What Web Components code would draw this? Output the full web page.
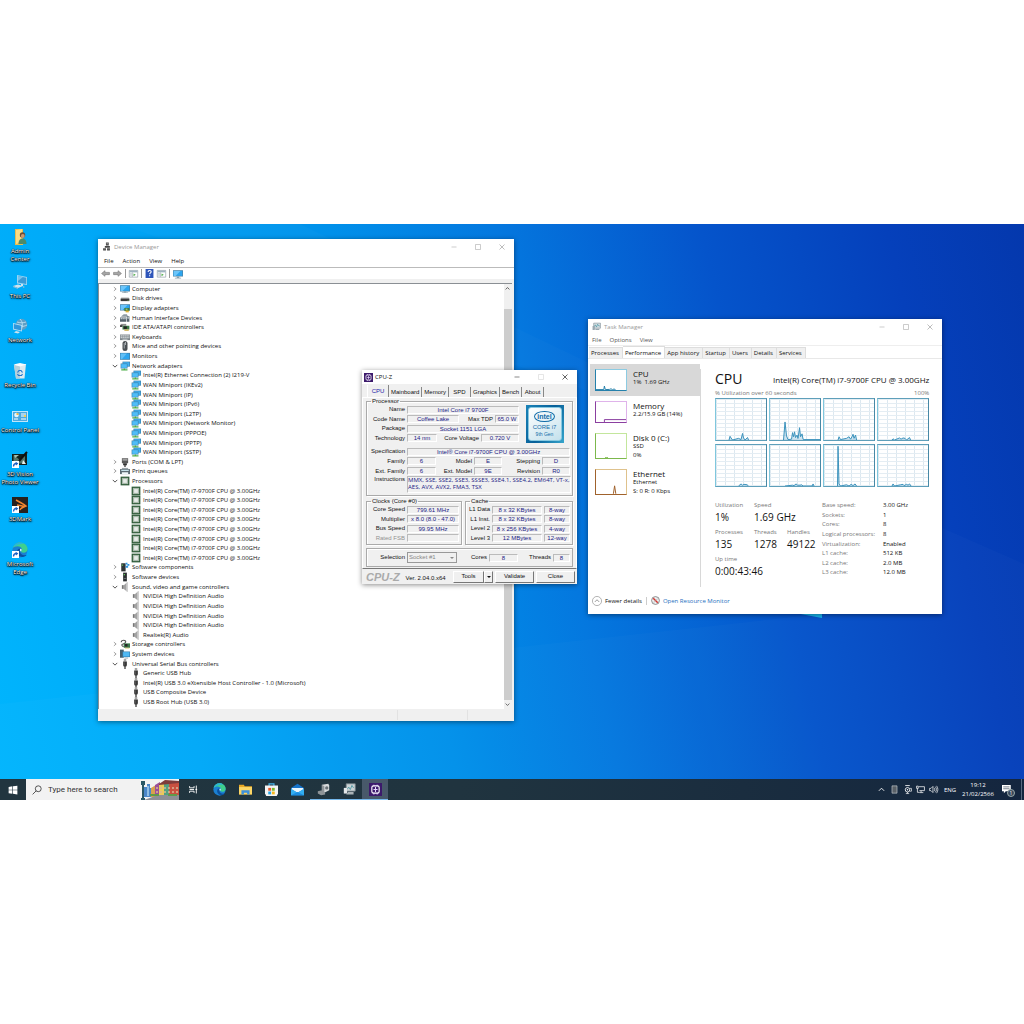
<!DOCTYPE html>
<html lang="en">
<head>
<meta charset="utf-8">
<title>Desktop</title>
<style>
  html, body { margin: 0; background: #fff; }
  body {
    min-height: 100vh;
    display: flex;
    align-items: center;
    font-family: "Open Sans", "Noto Sans", sans-serif;
    font-size: 6px;
    line-height: 8px;
    color: #111;
  }
</style>
</head>
<body>
<desktop-screen>
  <desktop-icon slot="icons" icon="admin" label="Admin<br>Center"></desktop-icon>
  <desktop-icon slot="icons" icon="pc" label="This PC"></desktop-icon>
  <desktop-icon slot="icons" icon="network" label="Network"></desktop-icon>
  <desktop-icon slot="icons" icon="bin" label="Recycle Bin"></desktop-icon>
  <desktop-icon slot="icons" icon="control" label="Control Panel"></desktop-icon>
  <desktop-icon slot="icons" icon="vision" label="3D Vision<br>Photo Viewer"></desktop-icon>
  <desktop-icon slot="icons" icon="mark" label="3DMark"></desktop-icon>
  <desktop-icon slot="icons" icon="edgelink" label="Microsoft<br>Edge"></desktop-icon>

  <app-window class="device" icon="devmgr" heading="Device Manager">
    <device-manager></device-manager>
  </app-window>
  <app-window class="task" icon="taskmgr" heading="Task Manager">
    <task-manager></task-manager>
  </app-window>
  <app-window class="cpuz" icon="cpuz" heading="CPU-Z" active>
    <cpu-z></cpu-z>
  </app-window>

  <task-bar slot="taskbar"></task-bar>
</desktop-screen>

<script>
// All icons share a 16x16 box
const screenShape = '<path fill="#4a7f9f" d="M0 2h16v10H0z"/><path fill="#2da5ee" d="M1 3h14v8H1z"/><path fill="#6bc5fa" d="M1 3h11L4 11H1z"/>';
const arrowBadge = '<path fill="#fff" d="M0 9h7v7H0z"/><path d="M1.500 14.500c0-2 1-3 3-3" fill="none" stroke="#1c62c4" stroke-width="1.300"/><path fill="#1c62c4" d="M3.500 9.700L6.400 11.400 4 13.400z"/>';
const edgeShape = '<circle cx="8" cy="8" r="7.600" fill="#1b80d2"/><path fill="#3fcf8e" d="M.8 6C2 2 5 .4 8 .4c4.500 0 7.600 3.300 7.600 6.600 0 2.600-2 3.800-4 3.800-1.800 0-2.600-.8-2.600-1.500 0-.6.8-1 .8-2C9.800 5.500 7.800 4.300 5.500 4.300 3.500 4.300 1.800 5 .8 6z"/><path fill="#2bb5d8" d="M.8 6C2 2 5 .4 8 .4c2 0 3.600.6 4.800 1.500C9 1.500 3 3 .8 6z"/><path fill="#0c519f" d="M5.500 8c-1.500 3 1 7 5 7 2 0 3.600-1.200 4.300-2.300-3 1.300-6.500 0-7-3.500-.1-1 .3-1.700.6-2C7.400 6.500 6.100 7 5.500 8z"/><path fill="#e8f8ff" d="M8.900 9.500c-1.300-.6-1.200-2.200-.2-2.700 1 .2 1.300 1.300.2 2.700z"/>';
const speaker = '<path fill="#777" d="M3 5h3v6H3z"/><path fill="#a3a3a3" d="M6 5l6-5v16l-6-5z"/><path fill="#d0d0d0" d="M10 2l2-2v16l-2-2z"/>';

const ICONS = {
  admin: '<path fill="#e9bd4e" d="M3 0h8v16H3z"/><path fill="#f9dc85" d="M4 1l6-1v13l-6 2z"/><circle cx="10.500" cy="6" r="2.700" fill="#6b4b34"/><circle cx="10.800" cy="7" r="1.900" fill="#c99a72"/><path fill="#4e8a6a" d="M6.500 15c0-4 2-5.500 4-5.500s4 1.500 4 5.500z"/>',
  pc: '<path fill="#9ad5f4" d="M5 1l10 2v8L5 9.500z"/><path fill="#3a9ad6" d="M6 2l8.200 1.800v6.200L6 8.500z"/><path fill="#74c3ee" d="M6 2l5 1.100L6 7z"/><path fill="#cfe3ee" d="M1 12l5-1.500 5 1.500-5 2zM9 10h2v2H9z"/><path fill="#8dbbd6" d="M1 12l5 2v1l-5-2zM11 12l2 1-2 1z"/>',
  network: '<circle cx="9.500" cy="6.500" r="5.800" fill="#5d9ec4"/><path d="M5 4c3 1 6 1 9 0M8 1c3 3 3 8 1 11M4 7c3 2 7 2 11 0" fill="none" stroke="#c4e6f7" stroke-width=".8"/><path fill="#b6e0f7" d="M1 5l9 2v6.500L1 11.500z"/><path fill="#2f97dc" d="M1.800 6l7.400 1.700v4.800l-7.400-1.700z"/><path fill="#cfe3ee" d="M4 13l4 1-2 1.500-4-1z"/>',
  bin: '<path fill="#dceaf0" d="M2 2l12-1-1.500 14.500h-8.500z"/><path fill="#b4cfda" d="M2 2l6 1v12.500H4z"/><path fill="#f7fcff" d="M1.500 1.500L8 0l6.500 1.500L8 3.500z"/><path d="M5.500 9.500L7 7.500h2l1.500 2M10.500 11l-1 1.500H6.500L5.500 11" fill="none" stroke="#2276cf" stroke-width="1.200"/>',
  control: '<path fill="#bfe6fa" d="M0 3h16v11H0z"/><path fill="#4ba9df" d="M1 4h14v9H1z"/><circle cx="4.500" cy="7" r="2.300" fill="#e5f7ff"/><path fill="#f0b840" d="M4.500 7V4.700A2.300 2.300 0 0 1 6.800 7z"/><path d="M9 6h5M9 8h3M9 11h5M2 11h4" stroke="#fff" stroke-width="1.200"/><path fill="#f4d051" d="M12 7h2v2h-2z"/>',
  vision: '<path fill="#12201c" d="M0 2h15v11H0z"/><path fill="#53756a" d="M1.500 3l6 4.500L13 3.500v8H1.500z"/><path fill="#a4c1b3" d="M2 3h5l-4 3z"/><path d="M15 0L7 9" stroke="#101010" stroke-width="2"/><path fill="#e6f0ec" d="M11 8l3 4h-4z"/>' + arrowBadge,
  mark: '<path fill="#26211f" d="M0 0h16v16H0z"/><path d="M4 3c5 3 8 4 10 6-3 1-5 1.500-6 4M5 8l8 1.500" fill="none" stroke="#f08530" stroke-width="1.500"/>' + arrowBadge,
  edgelink: edgeShape + arrowBadge,
  edge: edgeShape,
  devmgr: '<path fill="#444" d="M7 1h5v5H7zM5 7h9v3H5zM2 11h5v4H2zM9 11h5v4H9z"/><path fill="#999" d="M8 2h3v2H8zM3 12h3v1H3zM10 12h3v1h-3z"/>',
  taskmgr: '<path fill="#d8dfe3" stroke="#76858e" d="M3 2h12v9H3z"/><path d="M4 8l2-3 2 4 2-5 2 3h2" fill="none" stroke="#2e8a9a"/><path fill="#9aa8b0" d="M1 7h4v7H1zM6 12h7v2H6z"/>',
  cpuz: '<path fill="#3c1a6b" d="M0 0h16v16H0z"/><rect x="3.500" y="3.500" width="9" height="9" rx="2" fill="none" stroke="#fff" stroke-width="1.400"/><path d="M6 2v2M10 2v2M6 12v2M10 12v2M8 5v6M5.500 8h5" stroke="#e6d6ff" stroke-width="1.300"/>',
  computer: screenShape + '<path fill="#7d929d" d="M6 12h4v1h3v1H3v-1h3z"/>',
  disk: '<path fill="#b4b4b4" d="M2 7h12l1 3H1z"/><path fill="#3b3b3b" d="M1 9h14v4H1z"/><path fill="#7ecb5e" d="M12 11h2v1h-2z"/>',
  display: screenShape + '<path fill="#3f7b3a" d="M7 8h8v5H7z"/><path fill="#e3b33a" d="M9 12h5v3H9z"/><path fill="#9ec88f" d="M9 9h3v2H9z"/>',
  hid: '<path fill="#8f9ba3" d="M2 5l4-3h5l2 4H2z"/><path fill="#56646d" d="M0 7h10v7H0zM11 5h4v9h-4z"/><path fill="#cdd6dc" d="M1 8h2v2H1zM4 8h2v2H4zM7 8h2v2H7zM12 6h2v3h-2z"/>',
  ide: '<path fill="#8e8e8e" d="M1 3h9v3H1z"/><path fill="#3c7a48" d="M4 6h11v6H4z"/><path fill="#222" d="M6 7h5v4H6z"/><path fill="#caa63c" d="M7 12h7v2H7z"/><path fill="#444" d="M0 5h4v3H0z"/>',
  keyboard: '<path fill="#7e878c" d="M0 4h16v9H0z"/><path fill="#c9ced1" d="M1 5h14v5H1z"/><path d="M1 7h14M4 5v5M7 5v5M10 5v5M13 5v5" stroke="#7e878c" stroke-width=".7"/><path fill="#e5e8ea" d="M4 11h8v1H4z"/>',
  mouse: '<rect x="4" y="0" width="8" height="16" rx="4" fill="#4a4f53"/><path fill="#a7afb4" d="M6 3h1.500v9H6z"/><path fill="#e0e4e6" d="M8 1.500h1v5H8z"/>',
  monitor: '<path fill="#427b9e" d="M0 3h16v11H0z"/><path fill="#2da5ee" d="M1 4h14v9H1z"/><path fill="#61bff6" d="M1 4h10l-8 9H1z"/>',
  nic: '<path fill="#3b80aa" d="M4 1h12v8H4z"/><path fill="#40b2f4" d="M5 2h10v6H5z"/><path fill="#3b80aa" d="M1 4h11v8H1z"/><path fill="#4fbdf9" d="M2 5h9v6H2z"/><path fill="#4dad49" d="M6 12h2v1h4v2H2v-2h4z"/>',
  port: '<path fill="#5a5a5a" d="M3 2h10v8H3z"/><path fill="#9d9d9d" d="M4 3h8v3H4z"/><path fill="#333" d="M5 10h6v3H5zM7 13h2v3H7z"/>',
  printer: '<path fill="#9aa3a8" d="M3 3h10v3H3z"/><path fill="#5c6b73" d="M0 5h16v8H0z"/><path fill="#c6e1ea" d="M2 6h12v2H2z"/><path fill="#eef6f9" d="M3 10h10v3H3z"/>',
  cpu: '<path fill="#2e5b38" d="M1 1h14v14H1z"/><path fill="#a9b9ab" d="M3 3h10v10H3z"/><path fill="#e7ece8" d="M5 5h6v6H5z"/>',
  softcomp: '<path fill="#2f3436" d="M2 2h7v13H2z"/><path fill="#5ec25b" d="M3 4h2v2H3z"/><path fill="#2f93dd" d="M9 1h3v3H9zM12 3h3v3h-3zM9 6h4v3H9z"/>',
  softdev: '<path fill="#2a2e30" d="M5 1h6v14H5z"/><path fill="#64c460" d="M6 3h2v2H6z"/><path fill="#878d90" d="M6 10h4v1H6z"/>',
  sound: speaker,
  storage: '<path d="M2 5c0-4 8-4 7 0S2 7 3 10c1 2 3 2 3 2" fill="none" stroke="#555" stroke-width="1.800"/><path fill="#39774a" d="M6 7h10v7H6z"/><path fill="#262626" d="M8 8h4v4H8z"/><path fill="#d4ae3b" d="M8 14h7v1H8z"/>',
  system: '<path fill="#46606e" d="M0 1h6v13H0z"/><path fill="#347fae" d="M4 4h12v9H4z"/><path fill="#4fb9f4" d="M5 5h10v7H5z"/><path fill="#7b8a92" d="M7 14h6v1H7z"/>',
  usb: '<path fill="#a5a5a5" d="M6 0h4v4H6z"/><path fill="#393939" d="M5 4h6v6l-1 2H6l-1-2zM7 12h2v4H7z"/><path fill="#777" d="M6 5h1v5H6z"/>',
  back: '<path fill="#a6a6a6" stroke="#6f6f6f" d="M1 8l6-5v3h8v4H7v3z"/>',
  forward: '<path fill="#a6a6a6" stroke="#6f6f6f" d="M15 8L9 3v3H1v4h8v3z"/>',
  pane: '<path fill="#fff" stroke="#7c8b95" d="M.5 2.500h15v12H.5z"/><path fill="#9fb4c1" d="M1 3h14v3H1z"/><path d="M6 6v8" stroke="#8b979e"/><path fill="#51ad4c" d="M8 8l4 2-4 3z"/><path d="M2 8h3M2 10h3M2 12h3" stroke="#a0adb5"/>',
  help: '<path fill="#2f56ba" d="M1 0h14v16H1z"/><path d="M5.500 5.500c0-4 5.500-3.500 5.500-.5 0 2-2.700 2-2.700 4.500M8.200 11v2" fill="none" stroke="#fff" stroke-width="2"/>',
  scan: screenShape + '<path fill="#8aa0ac" d="M6 12h4v2h3v1H3v-1h3z"/>',
  min: '<path d="M3 8h10" stroke="currentColor"/>',
  max: '<path d="M3 3h10v10H3z" fill="none" stroke="currentColor"/>',
  close: '<path d="M3 3l10 10M13 3L3 13" stroke="currentColor" stroke-width="1.300"/>',
  right: '<path d="M5 3l6 5-6 5" fill="none" stroke="#777" stroke-width="1.800"/>',
  down: '<path d="M2 5l6 6 6-6" fill="none" stroke="#333" stroke-width="2.200"/>',
  up: '<path d="M2 11l6-6 6 6" fill="none" stroke="currentColor" stroke-width="2"/>',
  circleup: '<circle cx="8" cy="8" r="7.300" fill="none" stroke="#888"/><path d="M4.500 9.500L8 6l3.500 3.500" fill="none" stroke="#777" stroke-width="1.200"/>',
  resmon: '<circle cx="8" cy="8" r="7" fill="#eceff1" stroke="#777" stroke-width="1.400"/><path d="M4 4l8 8" stroke="#d3332d" stroke-width="2.500"/><path d="M5 12c1-3 3-5 7-7" fill="none" stroke="#9aa"/>',
  start: '<path fill="#fff" d="M1 3l6-1v5.500H1zM8 1.900L15 1v6.500H8zM1 8.500h6V14l-6-1zM8 8.500h7V15l-7-.9z"/>',
  search: '<circle cx="10" cy="6" r="4.700" fill="none" stroke="#333" stroke-width="1.300"/><path d="M6.700 9.300L1 15" stroke="#333" stroke-width="1.300"/>',
  taskview: '<path d="M1 2v3h8V2M1 14v-3h8v3M1 8h8M13 1v14M11.500 8h3" fill="none" stroke="#fff" stroke-width="1.600"/>',
  folder: '<path fill="#e8a825" d="M0 2h6l1 2h9v10H0z"/><path fill="#fbd667" d="M0 5h16v9H0z"/><path fill="#3c90dc" d="M3 9h10v5h-3v-2H6v2H3z"/>',
  store: '<path d="M5 4V1h6v3" fill="none" stroke="#45b4ea" stroke-width="1.500"/><path fill="#f4f4f4" d="M0 3h16v10l-1.500 3h-13L0 13z"/><path fill="#e8572c" d="M4 6h3.500v3.500H4z"/><path fill="#7cb82f" d="M8.500 6H12v3.500H8.500z"/><path fill="#29a4e4" d="M4 10.500h3.500V14H4z"/><path fill="#f7b81c" d="M8.500 10.500H12V14H8.500z"/>',
  mail: '<path fill="#1673ca" d="M0 6l8-5 8 5v9H0z"/><path fill="#e8f5fd" d="M1 6h14v2l-7 4-7-4z"/><path fill="#32aef0" d="M0 7l8 5 8-5v8H0z"/><path fill="#1b8be0" d="M0 15l8-4 8 4z"/>',
  drive: '<path fill="#d5d8da" d="M6 2l8-1 1 2v6l-6 3-3-2z"/><path fill="#8e9498" d="M6 2l3 2v8l-3-2zM1 10l5-1 4 3v2l-5 1-4-2z"/><circle cx="12" cy="6" r="2" fill="#666e73"/>',
  chart: '<path fill="#cbd2d5" stroke="#7d8a90" d="M4 1h11v9H4z"/><path d="M5 8l2-3 2 3 2-5 2 3" fill="none" stroke="#41929f"/><path fill="#e3e6e8" d="M1 6h4v7H1z"/><path fill="#aab3b7" d="M6 11h7v3H4z"/>',
  phone: '<path fill="#5a6168" stroke="#d8dde1" d="M3.500 1.500h9v13h-9z"/>',
  cam: '<path d="M4 1h8" stroke="#fff" stroke-width="1.500"/><circle cx="8" cy="8.500" r="4" fill="none" stroke="#fff" stroke-width="1.500"/><circle cx="8" cy="8.500" r="1.300" fill="#fff"/><path d="M8 12.500V15M5 15.200h6M12 6h3v5h-3" fill="none" stroke="#fff" stroke-width="1.200"/>',
  lan: '<path d="M5 3h10v7H6M9 10v3M6 13.500h7M1 2h3v4H1zM2.500 6v7H6" fill="none" stroke="#fff" stroke-width="1.300"/>',
  volume: '<path d="M1 6h2.500L7 2.500v11L3.500 10H1zM9 5c1.500 2 1.500 4 0 6M11.300 3c2.500 3 2.500 7 0 10M13.500 1.500c3 4 3 9 0 13" fill="none" stroke="#fff" stroke-width="1.200"/>',
  note: '<path fill="#fff" d="M0 0h14v10H6l-3 3v-3H0z"/><path d="M2 3h10M2 6h10" stroke="#26374c"/>'
};

class Base extends HTMLElement {
  constructor() {
    super();
    this.attachShadow({ mode: "open" });
  }

  connectedCallback() {
    this.shadowRoot.innerHTML = `
      <style>
        *, *::before { box-sizing: border-box; }
        button, select, input {
          font: inherit; color: inherit; margin: 0; padding: 0;
          border: 0; background: none; border-radius: 0; appearance: none;
          white-space: nowrap;
        }
        a { color: inherit; text-decoration: none; }
        ul { list-style: none; margin: 0; padding: 0; }
      </style>` + this.render();
  }
}

const icon = (name, size = 10) => `<ui-icon name="${name}" style="--size: ${size}px"></ui-icon>`;

customElements.define("ui-icon", class extends Base {
  render() {
    return `
      <style>
        :host { display: block; flex: none; width: var(--size, 10px); height: var(--size, 10px); }
        svg { display: block; width: 100%; height: 100%; overflow: visible; }
      </style>
      <svg viewBox="0 0 16 16" aria-hidden="true">${ICONS[this.getAttribute("name")]}</svg>`;
  }
});

customElements.define("desktop-icon", class extends Base {
  render() {
    return `
      <style>
        :host { display: block; }
        button {
          display: flex; flex-direction: column; align-items: center; gap: 2px;
          width: 100%; color: #fff;
          text-shadow: 0 0 1px #000, 0 0 1px #000, 0 1px 1px #000, 1px 1px 2px #000;
        }
        span { text-align: center; }
      </style>
      <button>${icon(this.getAttribute("icon"), 16)}<span>${this.getAttribute("label")}</span></button>`;
  }
});

customElements.define("app-window", class extends Base {
  render() {
    return `
      <style>
        :host { display: flex; flex-direction: column; background: #fff; color: #999; }
        :host([active]) { color: #111; }
        header { display: flex; align-items: center; gap: 3px; padding-left: 4px; height: 15px; flex: none; }
        :host([active]) header { height: 14px; padding-left: 2px; gap: 2px; }
        h1 { font: inherit; margin: 0; flex: 1; }
        .buttons { display: flex; }
        header button { width: 24px; height: 14px; display: grid; place-items: center; }
        :host([active]) .max { color: #ccc; }
        ::slotted(*) { flex: 1; min-height: 0; color: #111; }
      </style>
      <header>
        ${icon(this.getAttribute("icon"), 9)}
        <h1>${this.getAttribute("heading")}</h1>
        <div class="buttons">
          <button aria-label="Minimize">${icon("min", 8)}</button>
          <button class="max" aria-label="Maximize">${icon("max", 8)}</button>
          <button aria-label="Close">${icon("close", 8)}</button>
        </div>
      </header>
      <slot></slot>`;
  }
});

// [icon, label, children]; no children means a closed node
const core = "Intel(R) Core(TM) i7-9700F CPU @ 3.00GHz";
const nvidia = "NVIDIA High Definition Audio";
const DEVICES = [
  ["computer", "Computer"],
  ["disk", "Disk drives"],
  ["display", "Display adapters"],
  ["hid", "Human Interface Devices"],
  ["ide", "IDE ATA/ATAPI controllers"],
  ["keyboard", "Keyboards"],
  ["mouse", "Mice and other pointing devices"],
  ["monitor", "Monitors"],
  ["nic", "Network adapters", [
    "Intel(R) Ethernet Connection (2) I219-V", "WAN Miniport (IKEv2)", "WAN Miniport (IP)",
    "WAN Miniport (IPv6)", "WAN Miniport (L2TP)", "WAN Miniport (Network Monitor)",
    "WAN Miniport (PPPOE)", "WAN Miniport (PPTP)", "WAN Miniport (SSTP)"]],
  ["port", "Ports (COM &amp; LPT)"],
  ["printer", "Print queues"],
  ["cpu", "Processors", [core, core, core, core, core, core, core, core]],
  ["softcomp", "Software components"],
  ["softdev", "Software devices"],
  ["sound", "Sound, video and game controllers", [nvidia, nvidia, nvidia, nvidia, "Realtek(R) Audio"]],
  ["storage", "Storage controllers"],
  ["system", "System devices"],
  ["usb", "Universal Serial Bus controllers", [
    "Generic USB Hub", "Intel(R) USB 3.0 eXtensible Host Controller - 1.0 (Microsoft)",
    "USB Composite Device", "USB Root Hub (USB 3.0)"]]
];

customElements.define("device-manager", class extends Base {
  render() {
    const rows = DEVICES.map(([name, label, children]) => `
      <li role="treeitem" class="row">${icon(children ? "down" : "right", 6)}${icon(name)}<span>${label}</span></li>
      ${(children || []).map((child) => `<li role="treeitem" class="row child">${icon(name)}<span>${child}</span></li>`).join("")}
    `).join("");

    return `
      <style>
        :host { display: flex; flex-direction: column; background: #f0f0f0; }
        nav { display: flex; gap: 9px; padding: 0 6px; height: 14px; background: #fff; border-bottom: 1px solid #bbb; }
        .tools { display: flex; align-items: center; gap: 3px; height: 11px; background: #fff; padding-left: 3px; }
        .tools i { width: 1px; height: 9px; background: #999; }
        .body { display: flex; flex: 1; min-height: 0; margin: 4px 2px 0 0; border: 1px solid #8a8f94; border-width: 1px 0 0 1px; background: #fff; }
        ul { flex: 1; display: flex; flex-direction: column; padding-bottom: 2px; }
        .row { flex: 1; display: flex; align-items: center; gap: 2px; padding-left: 13px; min-height: 0; white-space: nowrap; }
        .child { padding-left: 32px; }
        .bar { width: 8px; background: #f0f0f0; display: flex; flex-direction: column; align-items: center; padding: 2px 0; }
        .thumb { flex: 1; align-self: stretch; background: #cdcdcd; margin: 18px 0 2px; }
        footer { display: flex; height: 12px; flex: none; }
        footer span { border-left: 1px solid #e2e2e2; width: 70px; margin: 1px 0; }
        footer span:first-child { flex: 1; border: 0; }
        footer span:last-child { width: 47px; }
      </style>
      <nav>${["File", "Action", "View", "Help"].map((t) => `<button>${t}</button>`).join("")}</nav>
      <div class="tools">
        <button aria-label="Back">${icon("back", 9)}</button>
        <button aria-label="Forward">${icon("forward", 9)}</button><i></i>
        <button aria-label="Show tree">${icon("pane", 9)}</button><i></i>
        <button aria-label="Help">${icon("help", 9)}</button>
        <button aria-label="Properties">${icon("pane", 9)}</button><i></i>
        <button aria-label="Scan">${icon("scan", 10)}</button>
      </div>
      <div class="body">
        <ul role="tree">${rows}</ul>
        <div class="bar">${icon("up", 5)}<div class="thumb"></div>${icon("down", 5)}</div>
      </div>
      <footer><span></span><span></span><span></span></footer>`;
  }
});

customElements.define("cpu-z", class extends Base {
  render() {
    const f = (text, cls = "") => `<output class="${cls}">${text}</output>`;
    const row = (cols, ...cells) => `<div class="row" style="grid-template-columns: ${cols}">${cells.join("")}</div>`;
    const l = (text) => `<span>${text}</span>`;

    return `
      <style>
        :host { display: flex; flex-direction: column; background: #f0f0f0; font-family: "Liberation Sans", sans-serif; line-height: 7px; }
        .tabs { display: flex; align-items: flex-end; padding: 1px 5px 0; }
        .tabs button { height: 10px; min-width: 22px; padding: 0 2px; border-right: 1px solid #888; }
        .tabs button:first-child { height: 12px; padding: 0 3px; color: #22a; border-left: 1px solid #fff; }
        main { flex: 1; display: flex; flex-direction: column; gap: 2px; padding: 0 3px; border: 1px solid #fff; border-bottom: 1px solid #777; }
        fieldset { margin: 0; padding: 0 2px; border: 1px solid #aaa; box-shadow: inset 1px 1px #fff, 1px 1px #fff; min-width: 0; }
        legend { padding: 0 1px; margin-left: 2px; line-height: 7px; }
        .row { display: grid; gap: 2px; align-items: center; }
        .row > span { text-align: right; white-space: nowrap; }
        output { display: block; height: 8px; line-height: 7px; color: #1a1a85; text-align: center; white-space: nowrap; border: 1px solid #bbb; border-color: #bbb #fff #fff #bbb; }
        .top { display: grid; grid-template-columns: 150px 1fr; align-items: center; justify-items: center; }
        .rows { display: grid; grid-auto-rows: 1fr; }
        .top .rows { width: 150px; height: 38px; }
        .mid { height: 29px; margin-top: 4px; }
        .ins { height: 17px; text-align: left; font-family: "Open Sans", "Noto Sans", sans-serif; }
        .last { align-items: start; margin-bottom: 2px; }
        .pair { display: grid; grid-template-columns: 96px 1fr; gap: 3px; }
        .pair .rows { height: 38px; margin-bottom: 1px; }
        .off { opacity: .45; }
        .sel { display: grid; grid-template-columns: 36px 50px 28px 29px 31px 1fr; align-items: center; gap: 2px; height: 19px; padding: 0 2px; border: 1px solid #aaa; box-shadow: inset 1px 1px #fff; margin: 1px 0; }
        .sel label, .sel > span { text-align: right; }
        .pick { display: grid; grid-template-columns: 1fr 8px; border: 1px solid #999; height: 11px; color: #888; align-items: center; }
        .pick select { padding-left: 1px; color: #888; opacity: 1; grid-area: 1 / 1 / 2 / 3; }
        .pick::after { content: ""; grid-area: 1 / 2; justify-self: center; border: 2px solid transparent; border-top-color: #888; border-bottom: 0; }
        .foot { display: flex; align-items: center; gap: 2px; height: 15px; padding: 0 2px 0 4px; }
        .foot b { font: italic bold 11px "Liberation Sans", sans-serif; color: #aaa; }
        .foot span { flex: 1; padding: 3px 0 0 4px; }
        .foot button { height: 12px; width: 39px; border: 1px solid #777; border-color: #fff #777 #777 #fff; }
        .foot .tools { width: 31px; margin-right: -2px; }
        .foot .drop { width: 9px; display: grid; place-items: center; }
        .drop::before { content: ""; border: 2px solid transparent; border-top-color: #111; border-bottom: 0; }
        .logo { width: 38px; height: 38px; padding: 2px; background: linear-gradient(120deg, #1a83b8, #075f98 50%, #36a5cc); }
        .logo div { height: 100%; border: 1px solid #87c9e1; border-radius: 3px; background: linear-gradient(150deg, #fff, #c4e1ec); color: #116ca8; text-align: center; display: flex; flex-direction: column; align-items: center; }
        .logo em { font: bold 7px/9px "Liberation Sans", sans-serif; border: 1px solid #116ca8; border-radius: 50%; padding: 0 2px; margin: 3px 0 2px; }
        .logo small { font-size: 5px; line-height: 6px; }
      </style>
      <div class="tabs">${["CPU", "Mainboard", "Memory", "SPD", "Graphics", "Bench", "About"].map((t) => `<button>${t}</button>`).join("")}</div>
      <main>
        <fieldset>
          <legend>Processor</legend>
          <div class="top">
            <div class="rows">
              ${row("36px 1fr", l("Name"), f("Intel Core i7 9700F"))}
              ${row("36px 1fr 32px 24px", l("Code Name"), f("Coffee Lake"), l("Max TDP"), f("65.0 W"))}
              ${row("36px 1fr", l("Package"), f("Socket 1151 LGA"))}
              ${row("36px 30px 1fr 38px", l("Technology"), f("14 nm"), l("Core Voltage"), f("0.720 V"))}
            </div>
            <div class="logo"><div><em>intel</em>CORE i7<small>9th Gen</small></div></div>
          </div>
          <div class="rows mid">
            ${row("36px 1fr", l("Specification"), f("Intel® Core i7-9700F CPU @ 3.00GHz"))}
            ${row("36px 29px 1fr 28px 36px 28px", l("Family"), f("6"), l("Model"), f("E"), l("Stepping"), f("D"))}
            ${row("36px 29px 1fr 28px 36px 28px", l("Ext. Family"), f("6"), l("Ext. Model"), f("9E"), l("Revision"), f("R0"))}
          </div>
          <div class="row last" style="grid-template-columns: 36px 1fr">
            ${l("Instructions")}${f("MMX, SSE, SSE2, SSE3, SSSE3, SSE4.1, SSE4.2, EM64T, VT-x,<br>AES, AVX, AVX2, FMA3, TSX", "ins")}
          </div>
        </fieldset>
        <div class="pair">
          <fieldset>
            <legend>Clocks (Core #0)</legend>
            <div class="rows">
              ${row("36px 1fr", l("Core Speed"), f("799.61 MHz"))}
              ${row("36px 1fr", l("Multiplier"), f("x 8.0 (8.0 - 47.0)"))}
              ${row("36px 1fr", l("Bus Speed"), f("99.95 MHz"))}
              ${row("36px 1fr", `<span class="off">Rated FSB</span>`, f(""))}
            </div>
          </fieldset>
          <fieldset>
            <legend>Cache</legend>
            <div class="rows">
              ${row("22px 1fr 26px", l("L1 Data"), f("8 x 32 KBytes"), f("8-way"))}
              ${row("22px 1fr 26px", l("L1 Inst."), f("8 x 32 KBytes"), f("8-way"))}
              ${row("22px 1fr 26px", l("Level 2"), f("8 x 256 KBytes"), f("4-way"))}
              ${row("22px 1fr 26px", l("Level 3"), f("12 MBytes"), f("12-way"))}
            </div>
          </fieldset>
        </div>
        <div class="sel">
          <label for="socket">Selection</label>
          <div class="pick"><select id="socket" disabled><option>Socket #1</option></select></div>
          <span>Cores</span>${f("8")}<span>Threads</span>${f("8")}
        </div>
      </main>
      <div class="foot">
        <b>CPU-Z</b><span>Ver. 2.04.0.x64</span>
        <button class="tools">Tools</button><button class="drop" aria-label="More tools"></button>
        <button>Validate</button><button>Close</button>
      </div>`;
  }
});

// Small line chart, points are given in a 100x100 box with y up
customElements.define("usage-graph", class extends Base {
  render() {
    const points = this.getAttribute("points") || "";
    const line = points.split(" ").filter(Boolean).map((p) => {
      const [x, y] = p.split(",");
      return `${x},${100 - y}`;
    }).join(" ");
    const grid = this.hasAttribute("grid");

    return `
      <style>
        :host { display: block; box-sizing: border-box; border: 1px solid var(--line); border-color: var(--pale) var(--pale) var(--line) var(--line); background-color: #fff; }
        :host([grid]) {
          border-color: #5e9fba #4889a6 #5e9fba #7fc7dd;
          background-image: linear-gradient(#e4edf3 1px, transparent 1px), linear-gradient(90deg, #dce8f0 1px, transparent 1px);
          background-size: 9px 4px;
        }
        svg { display: block; width: 100%; height: 100%; }
      </style>
      <svg viewBox="0 0 100 100" preserveAspectRatio="none" aria-hidden="true">
        <polyline points="${line}" fill="${grid ? "rgba(17,125,187,.2)" : "none"}" stroke="var(--line)" stroke-width="1" vector-effect="non-scaling-stroke"/>
      </svg>`;
  }
});

customElements.define("task-manager", class extends Base {
  render() {
    const items = [
      ["CPU", "1%&nbsp; 1.69 GHz", "#2580ab", "#8ccbe2", "0,2 26,2 28,20 31,2 45,3 50,6 55,2 60,5 65,2"],
      ["Memory", "2.2/15.9 GB (14%)", "#8b3fa0", "#dfb3ea", "28,0 28,12 100,12"],
      ["Disk 0 (C:)", "SSD<br>0%", "#7cb84c", "#c3e69c", "30,1 35,2 40,1"],
      ["Ethernet", "Ethernet<br>S: 0 R: 0 Kbps", "#a0622c", "#dfc28c", "58,1 62,34 66,1"]
    ];
    const graphs = [
      "26,0 28,9 30,5 33,0 45,4 50,1 53,16 55,5 58,0 63,6 65,0",
      "27,0 30,44 33,10 36,1 43,2 45,18 47,8 49,20 51,6 54,12 56,4 59,30 61,8 64,15 66,2 68,1 100,1",
      "28,0 30,8 33,1 45,4 50,8 53,2 56,8 58,14 60,4 63,12 65,0",
      "28,0 30,3 33,0 43,5 46,2 50,5 54,4 57,0 63,6 65,0",
      "45,0 50,5 53,2 56,4 62,3 65,0",
      "30,0 45,2 48,1 52,5 55,2 60,2 63,3 66,0 84,0 86,5 88,0",
      "27,0 28,97 30,5 33,0 45,3 50,0 54,4 58,1 62,5 65,0",
      "28,0 30,5 33,0 45,3 50,4 52,1 57,4 60,2 63,5 66,0"
    ];
    const details = [
      ["Base speed:", "3.00 GHz"], ["Sockets:", "1"], ["Cores:", "8"], ["Logical processors:", "8"],
      ["Virtualization:", "Enabled"], ["L1 cache:", "512 KB"], ["L2 cache:", "2.0 MB"], ["L3 cache:", "12.0 MB"]
    ];
    const tabs = ["Processes", "Performance", "App history", "Startup", "Users", "Details", "Services"];

    return `
      <style>
        :host { display: flex; flex-direction: column; background: #fff; }
        .menu { display: flex; gap: 8px; padding: 0 4px; height: 12px; border-bottom: 1px solid #eee; color: #555; }
        .tabs { display: flex; align-items: flex-end; height: 13px; padding-left: 1px; border-bottom: 1px solid #e8e8e8; }
        .tabs button { height: 11px; padding: 0 3px 0 2px; background: #f0f0f0; border: 1px solid #ddd; border-width: 1px 1px 0 0; }
        .tabs .on { height: 12px; background: #fff; }
        .main { display: flex; flex: 1; padding: 5px 13px 0 2px; }
        .side { width: 110px; display: flex; flex-direction: column; }
        .side button { display: flex; gap: 6px; padding: 5px; text-align: left; height: 32px; }
        .side .tall { height: 36px; }
        .side .on { background: #d8d8d8; }
        .side usage-graph { width: 32px; height: 100%; }
        .side strong { display: block; font-weight: normal; font-size: 8px; line-height: 9px; }
        .side span { display: block; line-height: 9px; }
        .pane { flex: 1; margin-top: 5px; border-left: 1px solid #d8d8d8; padding: 0 0 5px 14px; }
        .head { display: flex; align-items: center; justify-content: space-between; height: 19px; }
        h2 { margin: 0; font-size: 14px; line-height: 18px; font-weight: normal; }
        .head span { font-size: 8px; padding-top: 3px; }
        .cap { display: flex; justify-content: space-between; height: 10px; line-height: 10px; color: #777; }
        .grid { display: grid; grid-template-columns: repeat(4, 1fr); grid-auto-rows: 43px; gap: 3px 2px; --line: #3c93bd; }
        .stats { display: flex; margin-top: 14px; }
        .left { display: grid; grid-template-columns: 39px 33px 1fr; grid-template-rows: repeat(3, 27px); width: 107px; }
        .left .wide { grid-column: span 2; }
        .left span, dt { color: #777; }
        .left b { display: block; font-weight: normal; font-size: 10px; line-height: 16px; }
        dl { margin: 0; display: grid; grid-template-columns: 61px 1fr; height: 77px; grid-auto-rows: 1fr; flex: 1; white-space: nowrap; }
        dd { margin: 0; }
        footer { display: flex; align-items: center; gap: 4px; height: 27px; padding-left: 4px; }
        footer button, footer a { display: flex; align-items: center; gap: 3px; }
        footer i { width: 1px; height: 8px; background: #ccc; }
        footer a { color: #1f6fc0; }
      </style>
      <nav class="menu"><button>File</button><button>Options</button><button>View</button></nav>
      <div class="tabs">${tabs.map((t) => `<button class="${t === "Performance" ? "on" : ""}">${t}</button>`).join("")}</div>
      <div class="main">
        <div class="side">
          ${items.map(([name, sub, line, pale, pts], i) => `
            <button class="${i ? "" : "on"} ${i > 1 ? "tall" : ""}">
              <usage-graph style="--line: ${line}; --pale: ${pale}" points="${pts}"></usage-graph>
              <div><strong>${name}</strong><span>${sub}</span></div>
            </button>`).join("")}
        </div>
        <section class="pane">
          <div class="head"><h2>CPU</h2><span>${core}</span></div>
          <div class="cap"><span>% Utilization over 60 seconds</span><span>100%</span></div>
          <div class="grid">${graphs.map((g) => `<usage-graph grid points="${g}"></usage-graph>`).join("")}</div>
          <div class="stats">
            <div class="left">
              <div><span>Utilization</span><b>1%</b></div>
              <div class="wide"><span>Speed</span><b>1.69 GHz</b></div>
              <div><span>Processes</span><b>135</b></div>
              <div><span>Threads</span><b>1278</b></div>
              <div><span>Handles</span><b>49122</b></div>
              <div class="wide"><span>Up time</span><b>0:00:43:46</b></div>
            </div>
            <dl>${details.map(([k, v]) => `<dt>${k}</dt><dd>${v}</dd>`).join("")}</dl>
          </div>
        </section>
      </div>
      <footer>
        <button>${icon("circleup")}Fewer details</button><i></i>
        <a href="#">${icon("resmon", 9)}Open Resource Monitor</a>
      </footer>`;
  }
});

customElements.define("task-bar", class extends Base {
  render() {
    const apps = ["taskview", "edge", "folder", "store", "mail", "drive", "chart", "cpuz"];
    return `
      <style>
        :host { display: flex; height: 21px; background: linear-gradient(90deg, #21353f, #20343f 45%, #14263f); color: #fff; }
        button { display: grid; place-items: center; width: 26px; height: 21px; }
        .search { display: flex; align-items: center; gap: 6px; width: 153px; padding-left: 6px; background: #f2f2f2; margin-right: 1px; }
        .search input { flex: 1; min-width: 0; font: 8px Roboto, sans-serif; color: #222; }
        .search input::placeholder { color: #333; opacity: 1; }
        .search svg { width: 39px; height: 21px; display: block; }
        .run { border-bottom: 1px solid #76b9ed; }
        .on { background: #48596a; }
        .tray { display: flex; align-items: center; margin-left: auto; gap: 4px; }
        .tray button { width: 9px; }
        .tray .lang { width: 16px; }
        .clock { text-align: center; line-height: 9px; width: 32px; }
        .tray .note { position: relative; width: 18px; margin-right: 1px; }
        .note b { position: absolute; right: 1px; bottom: 3px; width: 8px; height: 8px; border-radius: 50%; background: #39485c; border: 1px solid #9aa; font: 5px/6px "Open Sans", sans-serif; text-align: center; }
        .peek { width: 3px; height: 100%; border-left: 1px solid #5a6b80; }
      </style>
      <button aria-label="Start">${icon("start")}</button>
      <label class="search">
        ${icon("search")}
        <input type="text" placeholder="Type here to search" aria-label="Search">
        <svg viewBox="0 0 39 21" aria-hidden="true">
          <path fill="#4a86c8" d="M4 8h3V5h3v4h2v9H4z"/><path fill="#8fbde4" d="M7 7h2v10H7z"/>
          <path fill="#d8a04e" d="M11 9l5-3v12h-5z"/><path fill="#9b4f9a" d="M15 6l5-3v14h-5z"/>
          <path fill="#ecc95b" d="M19 5l6-2v14h-6z"/><path fill="#54a080" d="M24 4l5-2v15h-5z"/><path fill="#c95040" d="M29 3l10-1v15H29z"/>
          <path fill="#7f3b3a" d="M19 5l6-4 14 1v2L19 6z"/>
          <path d="M16 9h22M16 13h22" stroke="#d9b795" stroke-width="1.500" stroke-dasharray="2 2"/>
          <path fill="#8d8f96" d="M4 21l14-5h21v5z"/><path fill="#5f9a4a" d="M10 15h9v2h-9zM28 15h9v2h-9z"/>
          <path fill="#295765" d="M1 2h4v4H1zM2 6h2v15H2zM1 19h4v2H1z"/>
        </svg>
      </label>
      ${apps.map((a, i) => `<button class="${i > 4 ? "run" : ""} ${i === 7 ? "on" : ""}" aria-label="${a}">${icon(a, i === 0 ? 9 : 13)}</button>`).join("")}
      <div class="tray">
        <button aria-label="Hidden icons">${icon("up", 7)}</button>
        <button aria-label="Phone">${icon("phone", 9)}</button>
        <button aria-label="Camera">${icon("cam", 9)}</button>
        <button aria-label="Network">${icon("lan", 9)}</button>
        <button aria-label="Volume">${icon("volume", 9)}</button>
        <button class="lang">ENG</button>
        <div class="clock">19:12<br>21/02/2566</div>
        <button class="note" aria-label="Notifications">${icon("note", 10)}<b>1</b></button>
        <div class="peek"></div>
      </div>`;
  }
});

customElements.define("desktop-screen", class extends Base {
  render() {
    return `
      <style>
        :host {
          display: flex; flex-direction: column; position: relative; overflow: hidden;
          box-sizing: border-box; width: 100%; aspect-ratio: 16 / 9;
          background: linear-gradient(77deg, #00b5fd 0%, #00a9f8 18%, #0090ea 40%, #0478df 54%, #0554cb 72%, #0540bb 88%, #0438ad 100%);
        }
        .rays { position: absolute; inset: 0; width: 100%; height: 100%; }
        .icons { flex: 1; position: relative; padding-top: 5px; }
        .icons div { display: grid; grid-template-rows: repeat(8, 1fr); width: 40px; height: 65%; }
        ::slotted(app-window) { position: absolute; box-shadow: 0 1px 5px rgba(0, 0, 0, .45); }
        /* windows lie free on the desktop, later ones on top */
        ::slotted(.device) { left: 98px; top: 15px; width: 40.6%; height: 83.7%; }
        ::slotted(.task) { left: 588px; top: 95px; width: 34.6%; }
        ::slotted(.cpuz) { left: 362px; top: 146px; width: 21%; }
        ::slotted(task-bar) { position: relative; }
      </style>
      <svg class="rays" viewBox="0 0 1024 576" preserveAspectRatio="none" aria-hidden="true">
        <path fill="#fff" opacity=".02" d="M120 0L820 250V390L0 480V576H1024V340L820 250 300 0z"/>
        <path fill="#18b7ee" d="M790 388l32 6v-6z"/>
      </svg>
      <div class="icons"><div><slot name="icons"></slot></div></div>
      <slot></slot>
      <slot name="taskbar"></slot>`;
  }
});
</script>
</body>
</html>
